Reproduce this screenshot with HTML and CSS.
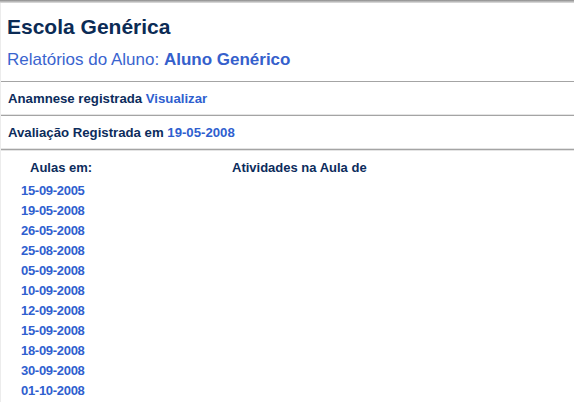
FILE: index.html
```html
<!DOCTYPE html>
<html lang="pt">
<head>
<meta charset="utf-8">
<title>Escola Genérica</title>
<link rel="stylesheet" href="styles.css">
</head>
<body>
<div class="topbar"></div>
<div class="page">
  <header class="header">
    <h1 class="title">Escola Genérica</h1>
    <h2 class="subtitle">Relatórios do Aluno: <b>Aluno Genérico</b></h2>
  </header>
  <div class="row">Anamnese registrada <a class="link" href="#">Visualizar</a></div>
  <div class="row">Avaliação Registrada em <a class="link" href="#">19-05-2008</a></div>
  <div class="lessons">
    <div class="col-dates">
      <div class="col-head">Aulas em:</div>
      <ul class="dates">
        <li><a class="link" href="#">15-09-2005</a></li>
        <li><a class="link" href="#">19-05-2008</a></li>
        <li><a class="link" href="#">26-05-2008</a></li>
        <li><a class="link" href="#">25-08-2008</a></li>
        <li><a class="link" href="#">05-09-2008</a></li>
        <li><a class="link" href="#">10-09-2008</a></li>
        <li><a class="link" href="#">12-09-2008</a></li>
        <li><a class="link" href="#">15-09-2008</a></li>
        <li><a class="link" href="#">18-09-2008</a></li>
        <li><a class="link" href="#">30-09-2008</a></li>
        <li><a class="link" href="#">01-10-2008</a></li>
      </ul>
    </div>
    <div class="col-acts">
      <div class="col-head acts-head">Atividades na Aula de</div>
    </div>
  </div>
</div>
</body>
</html>
```

FILE: styles.css
```css
html, body {
  margin: 0;
  padding: 0;
  background: #ffffff;
}
body {
  font-family: "Liberation Sans", Arial, sans-serif;
  color: #0c2c5c;
  overflow: hidden;
}
.topbar {
  height: 3px;
  background: linear-gradient(#8a8a8a, #b8b8b8 50%, #e2e2e2);
}
.page {
  border-left: 1px solid #ececec;
  min-height: 399px;
}
.header {
  padding: 12px 0 11px 6px;
}
.title {
  margin: 0;
  font-size: 21px;
  line-height: 24px;
  font-weight: bold;
  color: #0b2b55;
}
.subtitle {
  margin: 11px 0 0 0;
  font-size: 17px;
  line-height: 20px;
  font-weight: normal;
  color: #3a64cf;
}
.subtitle b {
  font-weight: bold;
  color: #3560cc;
}
.row {
  border-top: 1px solid #a4a4a4;
  border-bottom: 1px solid #e4e4e4;
  padding: 9px 0 7px 7px;
  font-size: 13.2px;
  line-height: 16px;
  font-weight: bold;
  color: #0c2c5c;
}
.link {
  color: #2f5fcf;
  text-decoration: none;
  font-weight: bold;
}
.lessons {
  border-top: 1px solid #a4a4a4;
  display: flex;
  padding-top: 8px;
  box-shadow: inset 0 1px 0 #e4e4e4;
}
.col-dates {
  width: 200px;
}
.col-head {
  font-size: 13px;
  line-height: 20px;
  font-weight: bold;
  color: #0c2c5c;
  padding-left: 29px;
}
.acts-head {
  padding-left: 31px;
}
.dates {
  list-style: none;
  margin: 3px 0 0 0;
  padding: 0 0 0 20px;
}
.dates li {
  font-size: 13px;
  line-height: 20px;
  letter-spacing: -0.3px;
}
```
